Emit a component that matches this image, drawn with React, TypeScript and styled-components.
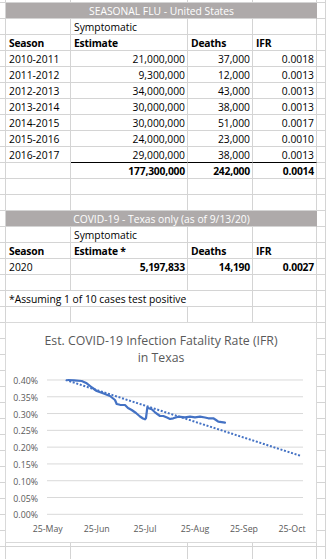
import styled, { createGlobalStyle } from "styled-components";

const GlobalStyle = createGlobalStyle`
  html, body {
    margin: 0;
    padding: 0;
    background: #fff;
  }
  body {
    width: 326px;
    height: 559px;
    overflow: hidden;
    font-family: "Open Sans", "Liberation Sans", sans-serif;
  }
`;

const Sheet = styled.div`
  position: relative;
  width: 326px;
  height: 559px;
  overflow: hidden;
`;

const Grid = styled.div`
  display: grid;
  grid-template-columns: 6px 65px 117px 65px 64px 9px;
  grid-template-rows: 3px;
  grid-auto-rows: 16px;
`;

type Align = "left" | "right" | "center";

const Cell = styled.div<{
  $span?: number;
  $align?: Align;
  $bold?: boolean;
  $fill?: boolean;
  $rule?: boolean;
}>`
  grid-column: span ${(p) => p.$span ?? 1};
  box-sizing: border-box;
  border-right: 1px solid ${(p) => (p.$fill ? "#aeaaaa" : "#d4d4d4")};
  border-bottom: 1px solid ${(p) => (p.$rule ? "#000" : "#d4d4d4")};
  background: ${(p) => (p.$fill ? "#aeaaaa" : "transparent")};
  color: ${(p) => (p.$fill ? "#fff" : "#000")};
  font-size: 10.3px;
  font-weight: ${(p) => (p.$bold ? 700 : 400)};
  letter-spacing: ${(p) => (p.$bold ? "-0.2px" : "0")};
  line-height: 16px;
  padding: 0 2px 0 3px;
  text-align: ${(p) => p.$align ?? "left"};
  white-space: nowrap;
  overflow: hidden;
`;

const Chart = styled.div`
  position: absolute;
  left: 5px;
  top: 322px;
  width: 312px;
  height: 221px;
  box-sizing: border-box;
  border: 1px solid #d9d9d9;
  background: #fff;
  display: flex;
  flex-direction: column;
`;

const ChartTitle = styled.div`
  height: 45px;
  box-sizing: border-box;
  padding-top: 10px;
  text-align: center;
  color: #595959;
  font-size: 12.3px;
  line-height: 16.5px;
`;

const Plot = styled.svg`
  display: block;
  width: 310px;
  height: 174px;
  font-family: "Open Sans", "Liberation Sans", sans-serif;
`;

type CellDef = {
  t?: string;
  span?: number;
  align?: Align;
  bold?: boolean;
  fill?: boolean;
  rule?: boolean;
};

const blank = (): CellDef[] => [{}, {}, {}, {}, {}, {}];

const row = (a: CellDef, b: CellDef, c: CellDef, d: CellDef): CellDef[] => [{}, a, b, c, d, {}];

const banner = (t: string): CellDef[] => [{}, { t, span: 4, fill: true, align: "center" }, {}];

const seasons: [string, string, string, string][] = [
  ["2010-2011", "21,000,000", "37,000", "0.0018"],
  ["2011-2012", "9,300,000", "12,000", "0.0013"],
  ["2012-2013", "34,000,000", "43,000", "0.0013"],
  ["2013-2014", "30,000,000", "38,000", "0.0013"],
  ["2014-2015", "30,000,000", "51,000", "0.0017"],
  ["2015-2016", "24,000,000", "23,000", "0.0010"],
  ["2016-2017", "29,000,000", "38,000", "0.0013"],
];

const rows: CellDef[][] = [
  blank(),
  banner("SEASONAL FLU - United States"),
  row({}, { t: "Symptomatic" }, {}, {}),
  row({ t: "Season", bold: true }, { t: "Estimate", bold: true }, { t: "Deaths", bold: true }, { t: "IFR", bold: true }),
  ...seasons.map(([s, e, d, r], i) => {
    const last = i === seasons.length - 1;
    return row(
      { t: s },
      { t: e, align: "right", rule: last },
      { t: d, align: "right", rule: last },
      { t: r, align: "right", rule: last }
    );
  }),
  row({}, { t: "177,300,000", align: "right", bold: true }, { t: "242,000", align: "right", bold: true }, { t: "0.0014", align: "right", bold: true }),
  blank(),
  blank(),
  banner("COVID-19 - Texas only (as of 9/13/20)"),
  row({}, { t: "Symptomatic" }, {}, {}),
  row({ t: "Season", bold: true }, { t: "Estimate *", bold: true }, { t: "Deaths", bold: true }, { t: "IFR", bold: true }),
  row({ t: "2020" }, { t: "5,197,833", align: "right", bold: true }, { t: "14,190", align: "right", bold: true }, { t: "0.0027", align: "right", bold: true }),
  blank(),
  [{}, { t: "*Assuming 1 of 10 cases test positive", span: 3 }, {}, {}],
  ...Array.from({ length: 16 }, blank),
];

const yTicks = ["0.00%", "0.05%", "0.10%", "0.15%", "0.20%", "0.25%", "0.30%", "0.35%", "0.40%"];
const xTicks: [string, number][] = [
  ["25-May", 47.7],
  ["25-Jun", 96.7],
  ["25-Jul", 145],
  ["25-Aug", 195],
  ["25-Sep", 244],
  ["25-Oct", 292],
];

const yAt = (k: number) => 514.3 - 16.79 * k;

const ifrLine =
  "M68,380 L74,380.3 L81.7,381 L86.7,383.3 L92,387.5 L96.7,391 L103,393.3 L110,396 L115,400 " +
  "L116.7,404 L120,404.8 L125,405 L128,408 L131.7,410 L136,413 L140,416.5 L143,418.5 L145,419.3 " +
  "L146,418 L147.3,407.7 L151.7,409.3 L155,412.3 L160,416 L163.3,416 L167,417.5 L170,419 " +
  "L173.3,418.3 L178.3,416.7 L185,417.3 L190,416.7 L195,417.3 L200,416.7 L205,417.5 " +
  "L208.3,418.3 L213.3,418.3 L216,420 L218.3,421.7 L225,422.7";

export default function App() {
  return (
    <Sheet>
      <GlobalStyle />
      <Grid>
        {rows.map((cells, r) =>
          cells.map((c, i) => (
            <Cell
              key={`${r}-${i}`}
              $span={c.span}
              $align={c.align}
              $bold={c.bold}
              $fill={c.fill}
              $rule={c.rule}
            >
              {c.t}
            </Cell>
          ))
        )}
      </Grid>
      <Chart>
        <ChartTitle>
          Est. COVID-19 Infection Fatality Rate (IFR)
          <br />
          in Texas
        </ChartTitle>
        <Plot viewBox="6 368 310 174">
          {yTicks.map((label, k) => (
            <g key={label}>
              <line x1={47} x2={303} y1={yAt(k)} y2={yAt(k)} stroke="#d9d9d9" strokeWidth={1} />
              <text x={38} y={yAt(k) + 1} textAnchor="end" dominantBaseline="central" fontSize={8.8} fill="#595959">
                {label}
              </text>
            </g>
          ))}
          {xTicks.map(([label, x]) => (
            <text key={label} x={x} y={529} textAnchor="middle" dominantBaseline="central" fontSize={8.8} fill="#595959">
              {label}
            </text>
          ))}
          <path d={ifrLine} fill="none" stroke="#4472c4" strokeWidth={2.2} strokeLinejoin="round" strokeLinecap="round" />
          <line x1={65.7} y1={380} x2={301} y2={456} stroke="#4472c4" strokeWidth={2} strokeDasharray="2 1.7" />
        </Plot>
      </Chart>
    </Sheet>
  );
}
